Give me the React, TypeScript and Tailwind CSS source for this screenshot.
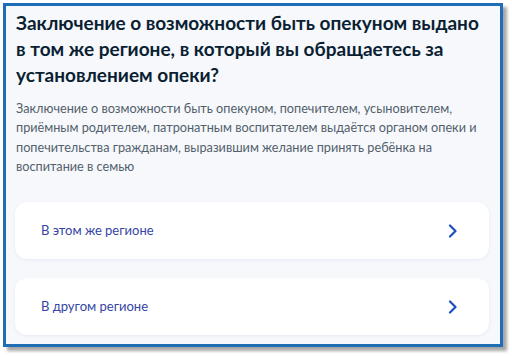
export default function App() {
  const options = ['В этом же регионе', 'В другом регионе'];

  return (
    <div className="w-[512px] h-[357px] bg-white pt-[3px] pl-[3px]" style={{ fontFamily: 'Lato, "Noto Sans", sans-serif' }}>
      <div className="w-[500px] h-[344px] border-[3px] border-[#1f6db4] bg-[#f6f8fb] shadow-[4px_4px_3px_rgba(0,0,0,0.35)] pl-[10px] pr-[11px] pt-[4px]">
        {/* Question */}
        <h1 className="text-[19px] leading-[26px] font-bold text-[#0b1f33]">
          Заключение о возможности быть опекуном выдано в том же регионе, в который вы обращаетесь за установлением опеки?
        </h1>

        <p className="mt-[11px] text-[12.7px] leading-[19.3px] text-[#535f6c]">
          Заключение о возможности быть опекуном, попечителем, усыновителем, приёмным родителем, патронатным воспитателем выдаётся органом опеки и попечительства гражданам, выразившим желание принять ребёнка на воспитание в семью
        </p>

        {/* Answers */}
        <div className="mt-[26px] flex flex-col gap-[19px]">
          {options.map(o => (
            <div
              key={o}
              className="h-[57px] bg-white rounded-[12px] shadow-[0_1px_3px_rgba(200,210,225,0.35)] flex items-center justify-between pl-[26px] pr-[30px] -ml-[1px]"
            >
              <span className="text-[13px] text-[#3445a6]">{o}</span>
              <svg className="w-[12px] h-[14px] text-[#1d4fc2]" viewBox="0 0 12 14" fill="none" stroke="currentColor" strokeWidth={2.2}>
                <path d="M3 1.5l5.5 5.5L3 12.5" strokeLinecap="round" strokeLinejoin="round" />
              </svg>
            </div>
          ))}
        </div>
      </div>
    </div>
  );
}
